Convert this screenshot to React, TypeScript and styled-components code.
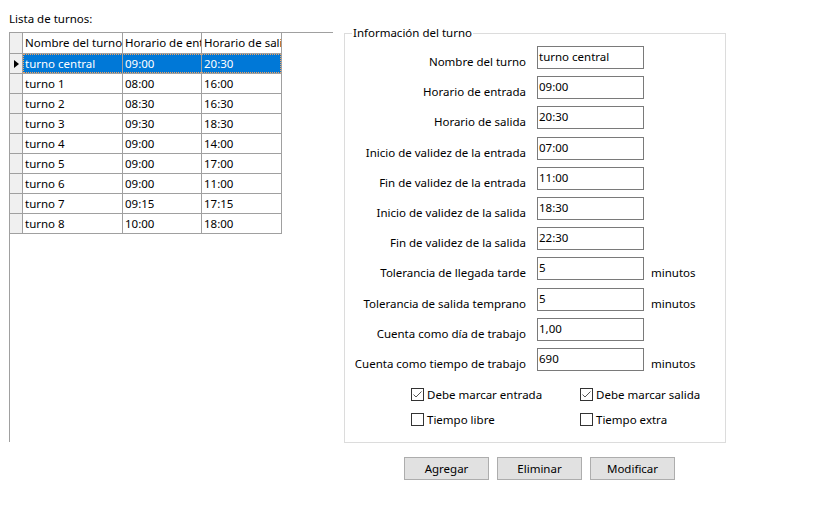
import React from "react";
import styled, { createGlobalStyle } from "styled-components";

const Global = createGlobalStyle`
  html, body { margin: 0; padding: 0; background: #ffffff; }
  body { font-family: "Segoe UI", "Noto Sans", "Open Sans", sans-serif; font-size: 11.5px; color: #000; }
  * { box-sizing: border-box; }
`;

const Page = styled.div`
  display: flex;
  align-items: flex-start;
  width: 828px;
  height: 527px;
`;

const LeftPane = styled.div`
  margin-left: 9px;
  width: 324px;
  display: flex;
  flex-direction: column;
`;

const PaneTitle = styled.div`
  height: 32px;
  padding-top: 11px;
  line-height: 16px;
`;

const GridBox = styled.div`
  height: 410px;
  border-left: 1px solid #a0a0a0;
  border-top: 1px solid #a0a0a0;
  display: flex;
  flex-direction: column;
`;

const GridRow = styled.div<{ $header?: boolean }>`
  display: flex;
  height: ${(p) => (p.$header ? 21 : 20)}px;
`;

const RowHead = styled.div`
  width: 13px;
  flex: none;
  background: #f0f0f0;
  border-right: 1px solid #a0a0a0;
  border-bottom: 1px solid #a0a0a0;
  display: flex;
  align-items: center;
  justify-content: center;
  padding-left: 1px;
`;

const Arrow = styled.span`
  width: 0;
  height: 0;
  border-top: 4.5px solid transparent;
  border-bottom: 4.5px solid transparent;
  border-left: 5px solid #000;
`;

const Cell = styled.div<{ $w: number; $sel?: boolean }>`
  width: ${(p) => p.$w}px;
  flex: none;
  border-right: 1px solid #a0a0a0;
  border-bottom: 1px solid #a0a0a0;
  background: ${(p) => (p.$sel ? "#0078d7" : "#ffffff")};
  color: ${(p) => (p.$sel ? "#ffffff" : "#000000")};
  padding-left: 2px;
  line-height: 19px;
  white-space: nowrap;
  overflow: hidden;
`;

const SelRow = styled.div`
  position: relative;
  display: flex;
  &::after {
    content: "";
    position: absolute;
    left: 0;
    top: 0;
    right: 1px;
    bottom: 1px;
    border: 1px dotted #f4a460;
    pointer-events: none;
  }
`;

const RightPane = styled.div`
  margin-left: 11px;
  width: 382px;
  padding-top: 25px;
  display: flex;
  flex-direction: column;
`;

const GroupBox = styled.fieldset`
  margin: 0;
  padding: 5px 0 0 0;
  border: 1px solid #dcdcdc;
  height: 418px;
  min-width: 0;
`;

const Legend = styled.legend`
  margin-left: 7px;
  padding: 0 1px;
  line-height: 16px;
`;

const FormGrid = styled.div`
  display: grid;
  grid-template-columns: 192px 107px 1fr;
  grid-auto-rows: 30.2px;
`;

const FieldLabel = styled.div`
  text-align: right;
  padding-right: 11px;
  align-self: start;
  padding-top: 8px;
  line-height: 16px;
  white-space: nowrap;
`;

const TextBox = styled.div`
  height: 23px;
  border: 1px solid #7a7a7a;
  padding: 1px 1px 0 1px;
  line-height: 18px;
  white-space: nowrap;
  overflow: hidden;
`;

const Unit = styled.div`
  padding-left: 7px;
  padding-top: 8px;
  line-height: 16px;
`;

const CheckGrid = styled.div`
  margin-top: 4px;
  margin-left: 66px;
  display: grid;
  grid-template-columns: 169px 1fr;
  grid-auto-rows: 25px;
`;

const CheckItem = styled.label`
  display: flex;
  align-items: center;
  gap: 3px;
  line-height: 16px;
`;

const Box = styled.span`
  width: 13px;
  height: 13px;
  border: 1px solid #333333;
  background: #fff;
  display: inline-flex;
  align-items: center;
  justify-content: center;
`;

const ButtonRow = styled.div`
  display: flex;
  gap: 8px;
  margin-top: 14px;
  padding-left: 60px;
`;

const Button = styled.button`
  width: 85px;
  height: 23px;
  background: #e1e1e1;
  border: 1px solid #adadad;
  font: inherit;
  color: #000;
  padding: 0;
  line-height: 16px;
`;

const rows = [
  ["turno central", "09:00", "20:30"],
  ["turno 1", "08:00", "16:00"],
  ["turno 2", "08:30", "16:30"],
  ["turno 3", "09:30", "18:30"],
  ["turno 4", "09:00", "14:00"],
  ["turno 5", "09:00", "17:00"],
  ["turno 6", "09:00", "11:00"],
  ["turno 7", "09:15", "17:15"],
  ["turno 8", "10:00", "18:00"],
];

const widths = [100, 79, 80];

const fields: [string, string, boolean][] = [
  ["Nombre del turno", "turno central", false],
  ["Horario de entrada", "09:00", false],
  ["Horario de salida", "20:30", false],
  ["Inicio de validez de la entrada", "07:00", false],
  ["Fin de validez de la entrada", "11:00", false],
  ["Inicio de validez de la salida", "18:30", false],
  ["Fin de validez de la salida", "22:30", false],
  ["Tolerancia de llegada tarde", "5", true],
  ["Tolerancia de salida temprano", "5", true],
  ["Cuenta como día de trabajo", "1,00", false],
  ["Cuenta como tiempo de trabajo", "690", true],
];

const Check = ({ on }: { on: boolean }) => (
  <Box>
    {on && (
      <svg width="11" height="11" viewBox="0 0 11 11">
        <path d="M1.5 5.5 L4 8 L9.5 2.5" fill="none" stroke="#555" strokeWidth="1" />
      </svg>
    )}
  </Box>
);

export default function App() {
  return (
    <>
      <Global />
      <Page>
        <LeftPane>
          <PaneTitle>Lista de turnos:</PaneTitle>
          <GridBox>
            <GridRow $header>
              <RowHead />
              <Cell $w={100}>Nombre del turno</Cell>
              <Cell $w={79}>Horario de entrada</Cell>
              <Cell $w={80}>Horario de salida</Cell>
            </GridRow>
            {rows.map((r, i) =>
              i === 0 ? (
                <GridRow key={i}>
                  <RowHead>
                    <Arrow />
                  </RowHead>
                  <SelRow>
                    {r.map((c, j) => (
                      <Cell key={j} $w={widths[j]} $sel>
                        {c}
                      </Cell>
                    ))}
                  </SelRow>
                </GridRow>
              ) : (
                <GridRow key={i}>
                  <RowHead />
                  {r.map((c, j) => (
                    <Cell key={j} $w={widths[j]}>
                      {c}
                    </Cell>
                  ))}
                </GridRow>
              )
            )}
          </GridBox>
        </LeftPane>
        <RightPane>
          <GroupBox>
            <Legend>Información del turno</Legend>
            <FormGrid>
              {fields.map(([l, v, u]) => (
                <React.Fragment key={l}>
                  <FieldLabel>{l}</FieldLabel>
                  <TextBox>{v}</TextBox>
                  <Unit>{u ? "minutos" : ""}</Unit>
                </React.Fragment>
              ))}
            </FormGrid>
            <CheckGrid>
              <CheckItem>
                <Check on />
                Debe marcar entrada
              </CheckItem>
              <CheckItem>
                <Check on />
                Debe marcar salida
              </CheckItem>
              <CheckItem>
                <Check on={false} />
                Tiempo libre
              </CheckItem>
              <CheckItem>
                <Check on={false} />
                Tiempo extra
              </CheckItem>
            </CheckGrid>
          </GroupBox>
          <ButtonRow>
            <Button>Agregar</Button>
            <Button>Eliminar</Button>
            <Button>Modificar</Button>
          </ButtonRow>
        </RightPane>
      </Page>
    </>
  );
}
